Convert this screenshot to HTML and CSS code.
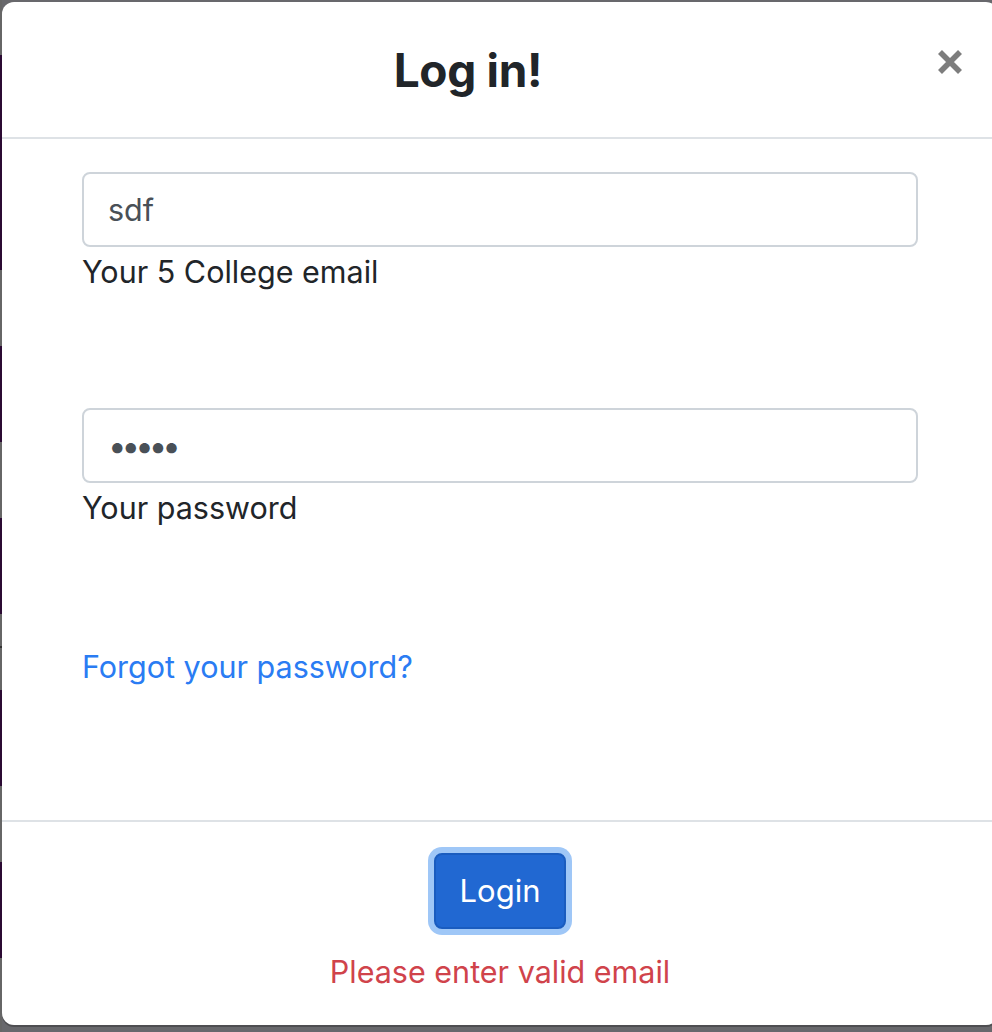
FILE: index.html
```html
<!DOCTYPE html>
<html lang="en">
<head>
<meta charset="utf-8">
<title>Log in!</title>
<link rel="stylesheet" href="styles.css">
</head>
<body>
<div class="modal">
  <div class="modal-header">
    <h4 class="modal-title">Log in!</h4>
    <button class="close" type="button" aria-label="Close">
      <svg width="24" height="24" viewBox="0 0 24 24"><path d="M2 2 L22 22 M22 2 L2 22" stroke="#7d7d7d" stroke-width="5.6" stroke-linecap="butt" fill="none"/></svg>
    </button>
  </div>
  <div class="modal-body">
    <input class="form-control" type="text" value="sdf">
    <div class="form-text">Your 5 College email</div>
    <input class="form-control pw" type="password" value="sdfsd">
    <div class="form-text">Your password</div>
    <a class="forgot" href="#">Forgot your password?</a>
  </div>
  <div class="modal-footer">
    <button class="btn" type="button">Login</button>
    <div class="error">Please enter valid email</div>
  </div>
</div>
</body>
</html>
```

FILE: styles.css
```css
html, body {
  margin: 0;
  padding: 0;
}
body {
  width: 992px;
  height: 1032px;
  overflow: hidden;
  background-color: #68686c;
  background-image: linear-gradient(to bottom,
    #666666 0px, #666666 55px,
    #2b0a33 55px, #2b0a33 270px,
    #666666 270px, #666666 346px,
    #2b0a33 346px, #2b0a33 442px,
    #666666 442px, #666666 518px,
    #2b0a33 518px, #2b0a33 614px,
    #666666 614px, #666666 646px,
    #333333 646px, #333333 648px,
    #666666 648px, #666666 690px,
    #2b0a33 690px, #2b0a33 786px,
    #666666 786px, #666666 862px,
    #2b0a33 862px, #2b0a33 958px,
    #666666 958px, #666666 1032px);
  background-size: 2px 1032px;
  background-repeat: no-repeat;
  font-family: Inter, "Liberation Sans", sans-serif;
  color: #212529;
}
.modal {
  margin: 2px 0 0 2px;
  width: 996px;
  height: 1023px;
  box-sizing: border-box;
  background: #ffffff;
  border-radius: 12px;
  box-shadow: 0 2px 0 0 rgba(0, 0, 0, 0.25);
  display: flex;
  flex-direction: column;
}
.modal-header {
  display: flex;
  align-items: flex-start;
  padding: 40px 30px 38px 32px;
  border-bottom: 2px solid #dee2e6;
}
.modal-title {
  flex: 1;
  margin: 0 36px 0 0;
  text-align: center;
  font-size: 46px;
  line-height: 57px;
  font-weight: 700;
  letter-spacing: -0.3px;
  color: #212529;
}
.close {
  background: none;
  border: 0;
  padding: 0;
  margin: 8px 6px 0 0;
  width: 24px;
  height: 24px;
  display: flex;
  cursor: pointer;
}
.modal-body {
  flex: 1;
  padding: 33px 80px 0 80px;
  display: flex;
  flex-direction: column;
  align-items: flex-start;
}
.form-control {
  box-sizing: border-box;
  width: 100%;
  height: 75px;
  margin: 0;
  padding: 0 24px;
  border: 2px solid #ced4da;
  border-radius: 8px;
  font-family: Inter, "Liberation Sans", sans-serif;
  font-size: 30.5px;
  color: #495057;
  background: #fff;
  outline: none;
}
.form-text {
  margin-top: 1px;
  font-size: 30.5px;
  line-height: 48px;
  color: #212529;
}
.form-control.pw {
  margin-top: 112px;
  padding-left: 24px;
  font-size: 33px;
  letter-spacing: -5px;
}
.forgot {
  margin-top: 111px;
  font-size: 30.5px;
  line-height: 48px;
  color: #2a7cf3;
  text-decoration: none;
}
.modal-footer {
  border-top: 2px solid #dee2e6;
  padding: 31px 32px 29px;
  display: flex;
  flex-direction: column;
  align-items: center;
}
.btn {
  box-sizing: border-box;
  height: 76px;
  padding: 0 24px;
  border: 2px solid #1a5cbf;
  border-radius: 8px;
  background: #2168d2;
  color: #ffffff;
  font-family: Inter, "Liberation Sans", sans-serif;
  font-size: 31px;
  line-height: 48px;
  box-shadow: 0 0 0 6px #9fc7f7;
  cursor: pointer;
}
.error {
  margin-top: 19px;
  font-size: 30.5px;
  line-height: 48px;
  color: #d0434b;
}
```
